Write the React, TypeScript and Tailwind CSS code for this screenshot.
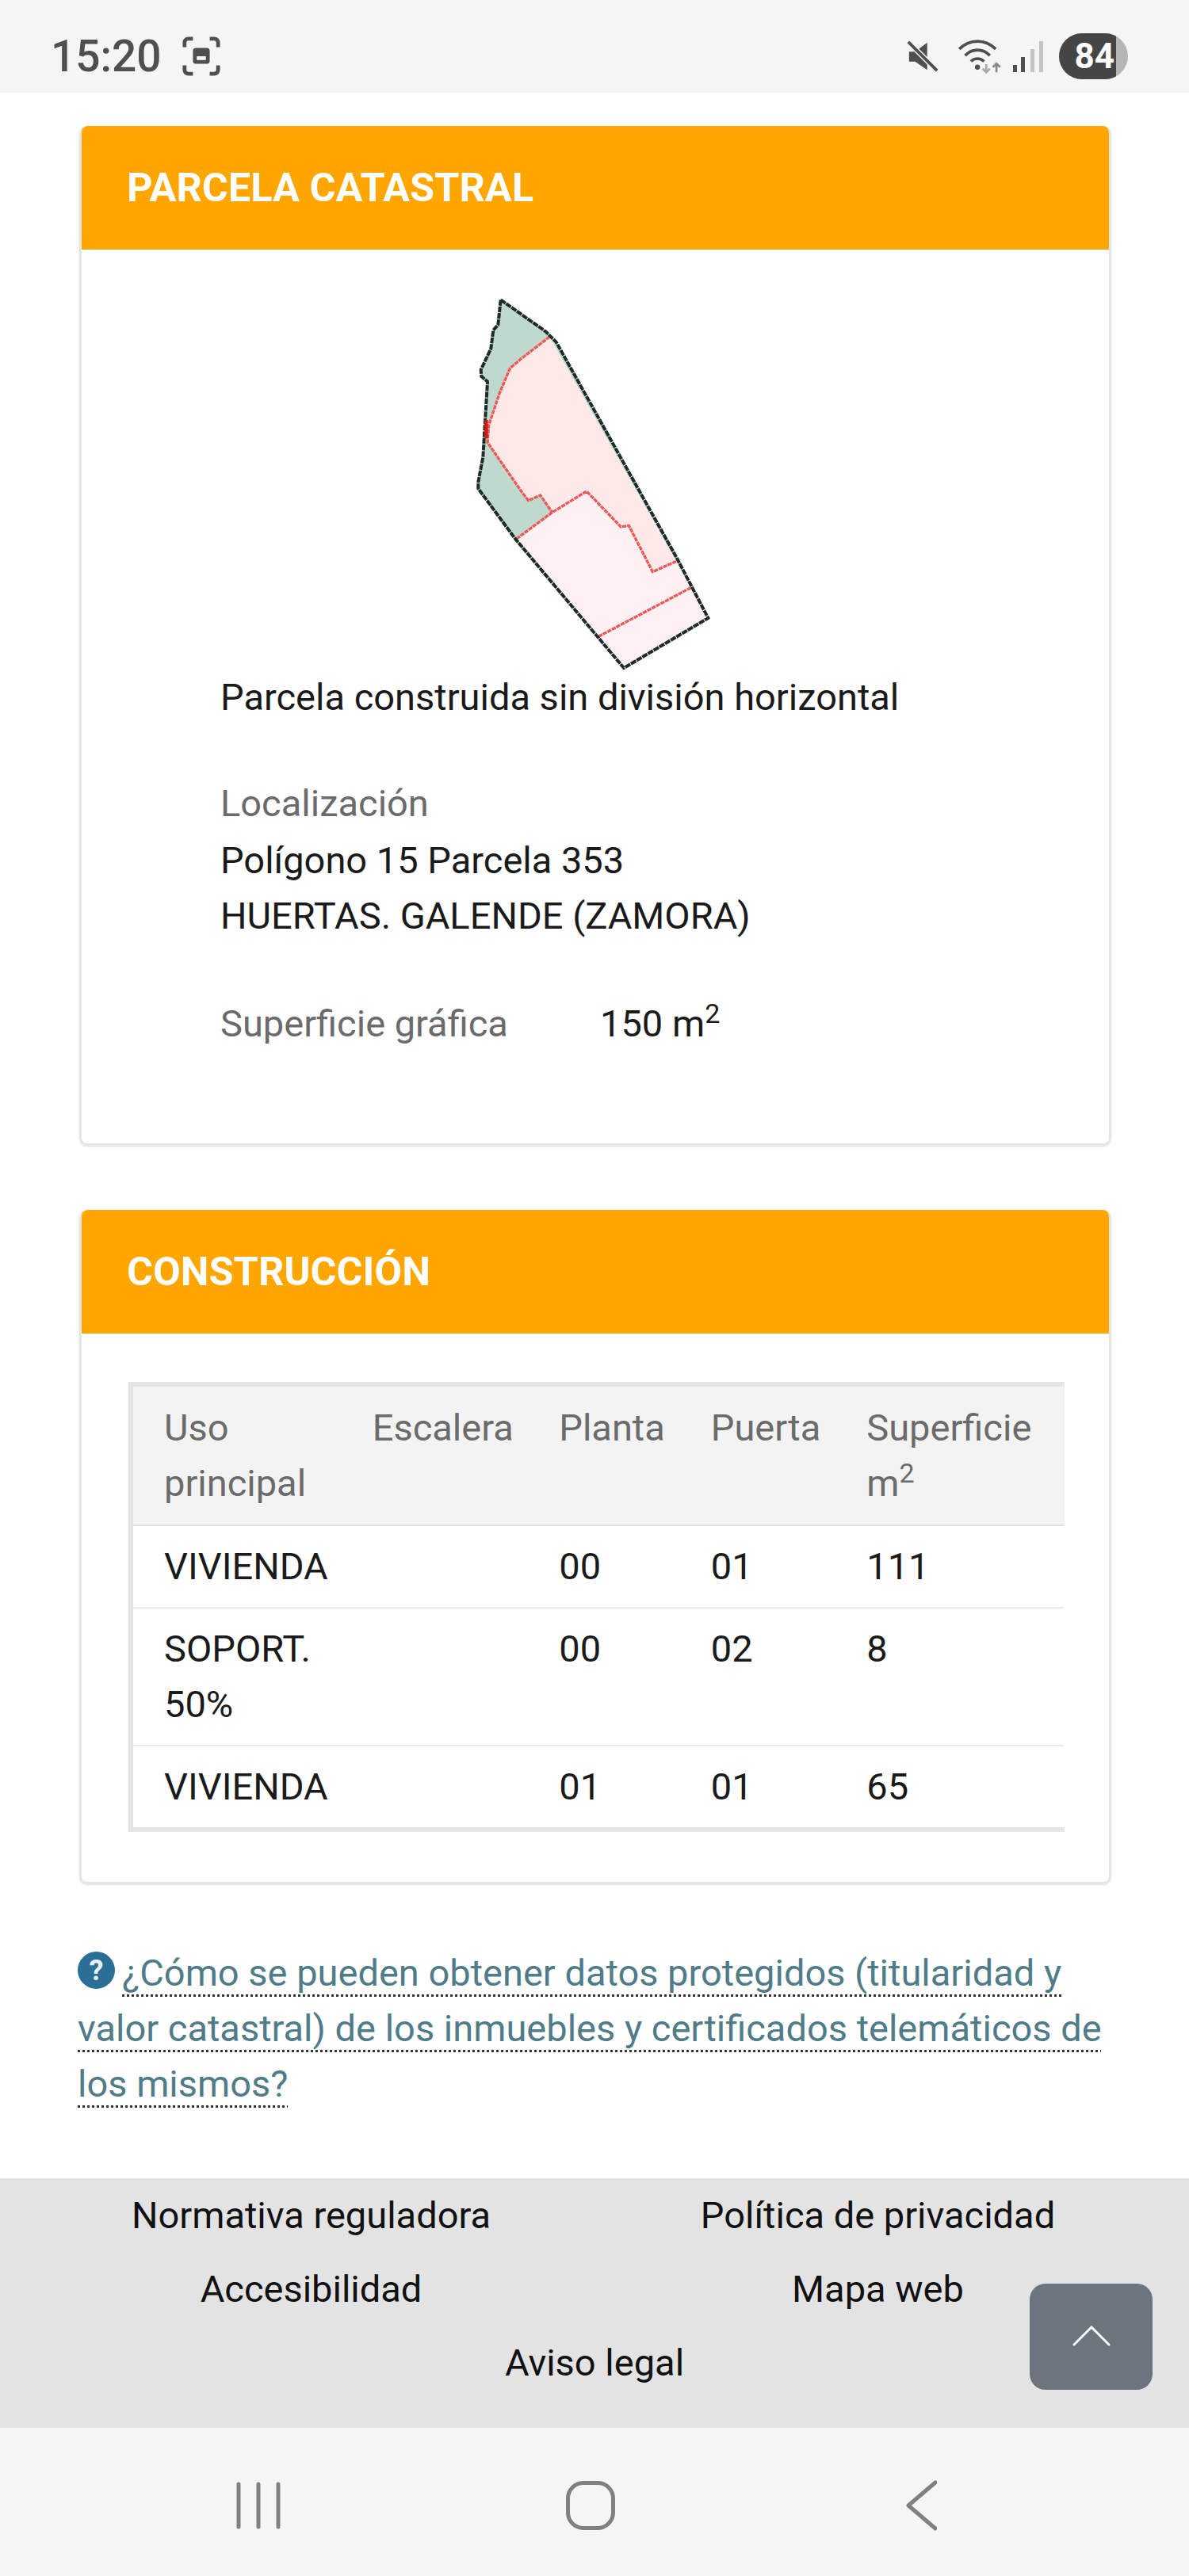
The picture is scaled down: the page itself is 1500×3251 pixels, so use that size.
const FONT = "font-['Roboto',sans-serif]";

const OUTLINE = '215,85 385,205 425,245 880,1060 1000,1290 681,1479 270,990 130,800 130,775 148,680 165,395 142,375 140,350 178,270 187,200 205,180';

const ParcelMap = () => (
  <svg viewBox="0 0 1080 1500" className="block h-[500px] w-[360px]" fill="none">
    <polygon points={OUTLINE} fill="#bfd9ce" />
    <polygon
      points="400,225 290,310 250,345 210,440 170,560 165,625 300,820 320,845 365,825 410,890 540,810 670,945 700,940 790,1115 880,1075"
      fill="#ffe8e8"
    />
    <polygon
      points="275,990 410,890 540,810 670,945 700,940 790,1115 880,1075 1000,1290 681,1479"
      fill="#fff0f3"
    />
    <polyline
      points="400,225 290,310 250,345 210,440 170,560 165,625 300,820 320,845 365,825 410,890"
      stroke="#ea5a5a"
      strokeWidth="10"
      strokeDasharray="16 3"
    />
    <polyline
      points="275,990 410,890 540,810 670,945 700,940 790,1115 880,1075"
      stroke="#ea5a5a"
      strokeWidth="10"
      strokeDasharray="16 3"
    />
    <line x1="585" y1="1360" x2="935" y2="1175" stroke="#ea5a5a" strokeWidth="10" strokeDasharray="16 3" />
    <polygon points={OUTLINE} stroke="#1f2b28" strokeWidth="12" strokeDasharray="22 3" />
    <line x1="160" y1="540" x2="160" y2="610" stroke="#d01a1a" strokeWidth="14" />
  </svg>
);

const CardHeader = ({ title }: { title: string }) => (
  <div className="flex h-[156px] items-center rounded-t-[8px] bg-[#ffa600] pl-[57px] text-[50.5px] font-bold text-white">
    {title}
  </div>
);

const rows = [
  { uso: 'VIVIENDA', planta: '00', puerta: '01', sup: '111' },
  { uso: 'SOPORT. 50%', planta: '00', puerta: '02', sup: '8' },
  { uso: 'VIVIENDA', planta: '01', puerta: '01', sup: '65' },
];

const Th = ({ children, className }: { children: React.ReactNode; className: string }) => (
  <th className={`py-[17px] pl-[39px] align-top font-normal text-[#6b6b6b] ${className}`}>{children}</th>
);

const StatusBar = () => (
  <div className="flex h-[117px] items-center justify-between bg-[#f5f5f5] pl-[64px] pr-[77px] pt-[25px]">
    <div className="flex items-center gap-[25px]">
      <span className="text-[55px] font-medium text-[#4f4f4f]">15:20</span>
      <svg viewBox="0 0 52 52" className="h-[50px] w-[50px]" fill="none" stroke="#4f4f4f" strokeWidth="5">
        <path d="M4 14V8a5 5 0 0 1 5-5h6M37 3h6a5 5 0 0 1 5 5v6M48 38v6a5 5 0 0 1-5 5h-6M15 49H9a5 5 0 0 1-5-5v-6" />
        <rect x="15" y="15" width="22" height="21" rx="4" fill="#4f4f4f" stroke="none" />
        <rect x="20" y="26" width="12" height="5" fill="#f5f5f5" stroke="none" />
      </svg>
    </div>
    <div className="flex items-center">
      <svg viewBox="0 0 44 44" className="mr-[20px] h-[42px] w-[42px]">
        <path d="M4 16h8L28 4v36L12 29H4z" fill="#4f4f4f" />
        <path d="M3 3l38 38" stroke="#f5f5f5" strokeWidth="7" />
        <path d="M3 3l38 38" stroke="#4f4f4f" strokeWidth="4" />
      </svg>
      <svg viewBox="0 0 60 50" className="h-[46px] w-[60px]" fill="none">
        <path d="M3 15C18 1 38 1 53 15" stroke="#4f4f4f" strokeWidth="4" />
        <path d="M11 24C21 14 35 14 45 24" stroke="#4f4f4f" strokeWidth="4" />
        <path d="M19 32C24 27 32 27 37 32" stroke="#4f4f4f" strokeWidth="4" />
        <circle cx="28" cy="40" r="3.5" fill="#4f4f4f" />
        <path d="M40 36v10M35 42l5 5 5-5" stroke="#aaa" strokeWidth="3" />
        <path d="M54 47V35M49 40l5-5 5 5" stroke="#8a8a8a" strokeWidth="3" />
      </svg>
      <svg viewBox="0 0 39 40" className="ml-[13px] h-[40px] w-[39px]">
        <rect x="0" y="31" width="5" height="9" fill="#4f4f4f" />
        <rect x="10" y="21" width="5" height="19" fill="#4f4f4f" />
        <rect x="22" y="11" width="5" height="29" fill="#c4c4c4" />
        <rect x="33" y="1" width="5" height="39" fill="#c4c4c4" />
      </svg>
      <div className="ml-[19px] flex h-[58px] w-[87px] items-center overflow-hidden rounded-[29px] bg-[#b5b5b5]">
        <div className="flex h-full w-[72px] items-center justify-end bg-[#454545] pr-[2px] text-[44px] font-bold text-white">
          84
        </div>
      </div>
    </div>
  </div>
);

const NavBar = () => (
  <div className="flex h-[187px] items-center bg-[#f5f5f5] pl-[298px] pt-[8px]">
    <svg viewBox="0 0 56 60" className="h-[60px] w-[56px]" fill="none" stroke="#808080" strokeWidth="5" strokeLinecap="round">
      <path d="M3 3v54M28 3v54M53 3v54" />
    </svg>
    <div className="ml-[360px] h-[62px] w-[62px] rounded-[22px] border-[5px] border-[#808080]" />
    <svg viewBox="0 0 40 64" className="ml-[366px] h-[64px] w-[40px]" fill="none" stroke="#808080" strokeWidth="5" strokeLinecap="round" strokeLinejoin="round">
      <path d="M38 3L4 32l34 29" />
    </svg>
  </div>
);

export default function App() {
  return (
    <div className={`min-h-[3251px] w-[1500px] bg-white text-[47px] leading-[70px] text-[#1a1a1a] ${FONT}`}>
      <StatusBar />
      <main className="pl-[100px] pr-[98px] pt-[42px]">
        <section className="rounded-[10px] border-[3px] border-t-0 border-[#e6e6e6] shadow-sm">
          <CardHeader title="PARCELA CATASTRAL" />
          <div className="h-[1128px] pl-[175px]">
            <div className="ml-[282px] h-[530px] pt-[35px]">
              <ParcelMap />
            </div>
            <p>Parcela construida sin división horizontal</p>
            <p className="mt-[64px] text-[#6b6b6b]">Localización</p>
            <p className="mt-[2px]">Polígono 15 Parcela 353</p>
            <p>HUERTAS. GALENDE (ZAMORA)</p>
            <div className="mt-[66px] flex">
              <span className="w-[479px] text-[#6b6b6b]">Superficie gráfica</span>
              <span>
                150 m<sup className="text-[34px]">2</sup>
              </span>
            </div>
          </div>
        </section>

        <section className="mt-[81px] rounded-[10px] border-[3px] border-t-0 border-[#e6e6e6] shadow-sm">
          <CardHeader title="CONSTRUCCIÓN" />
          <div className="pb-[63px] pl-[59px] pr-[57px] pt-[61px]">
            <table className="w-[1181px] table-fixed border-b-[6px] border-l-[6px] border-t-[6px] border-[#e5e5e5] text-left">
              <thead>
                <tr className="border-b-[2px] border-[#e3e3e3] bg-[#f3f3f3]">
                  <Th className="w-[265px]">Uso principal</Th>
                  <Th className="w-[235px]">Escalera</Th>
                  <Th className="w-[191px]">Planta</Th>
                  <Th className="w-[196px]">Puerta</Th>
                  <Th className="w-[288px]">
                    Superficie m<sup className="text-[34px]">2</sup>
                  </Th>
                </tr>
              </thead>
              <tbody>
                {rows.map((row, index) => (
                  <tr key={index} className={index < rows.length - 1 ? 'border-b-[2px] border-[#e8e8e8]' : ''}>
                    <td className="py-[16px] pl-[39px] align-top">{row.uso}</td>
                    <td />
                    <td className="py-[16px] pl-[39px] align-top">{row.planta}</td>
                    <td className="py-[16px] pl-[39px] align-top">{row.puerta}</td>
                    <td className="py-[16px] pl-[39px] align-top">{row.sup}</td>
                  </tr>
                ))}
              </tbody>
            </table>
          </div>
        </section>
      </main>

      <p className="mt-[77px] pl-[98px] pr-[90px] text-[#4f7c88]">
        <span className="mr-[9px] mt-[8px] inline-flex h-[47px] w-[47px] items-center justify-center rounded-full bg-[#2b6f97] align-top text-[36px] font-bold leading-none text-[#e8f2f6]">
          ?
        </span>
        <span className="underline decoration-[#333] decoration-dotted decoration-[3px] underline-offset-[11px] [text-decoration-skip-ink:none]">
          ¿Cómo se pueden obtener datos protegidos (titularidad y valor catastral) de los inmuebles y certificados telemáticos de los mismos?
        </span>
      </p>

      <footer className="relative mt-[84px] grid grid-cols-2 bg-[#e3e3e3] pb-[36px] pl-[35px] pr-[35px] text-center leading-[93px] text-[#111]">
        <span>Normativa reguladora</span>
        <span>Política de privacidad</span>
        <span>Accesibilidad</span>
        <span>Mapa web</span>
        <span className="col-span-2">Aviso legal</span>
        <button className="absolute left-[1299px] top-[133px] flex h-[134px] w-[155px] items-start justify-center rounded-[20px] bg-[#6c757d] pt-[53px]">
          <svg viewBox="0 0 48 26" className="h-[26px] w-[48px]" fill="none" stroke="white" strokeWidth="3" strokeLinecap="round">
            <path d="M2 24L24 2l22 22" />
          </svg>
        </button>
      </footer>
      <NavBar />
    </div>
  );
}
